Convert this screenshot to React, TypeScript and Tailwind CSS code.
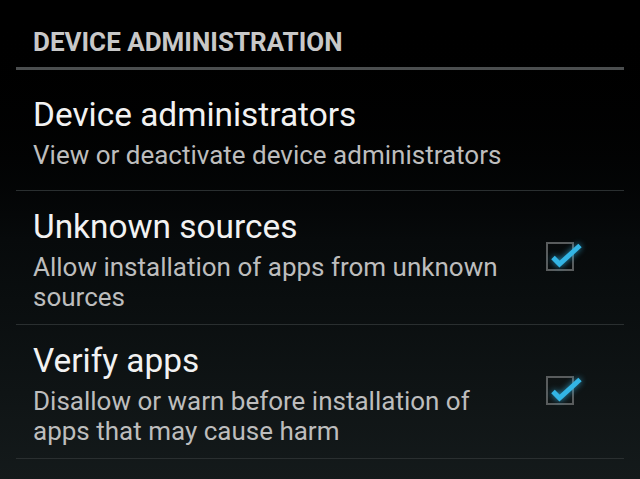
import React from 'react';

interface PrefItem {
  title: string;
  summary: string;
  checked?: boolean;
}

const items: PrefItem[] = [
  { title: 'Device administrators', summary: 'View or deactivate device administrators' },
  { title: 'Unknown sources', summary: 'Allow installation of apps from unknown sources', checked: true },
  { title: 'Verify apps', summary: 'Disallow or warn before installation of apps that may cause harm', checked: true },
];

const CheckBox = (): JSX.Element => {
  return (
    <div className="relative w-[28px] h-[29px] border-2 border-[#595c5d]">
      <svg
        className="absolute left-0 top-0 overflow-visible"
        width="28"
        height="29"
        viewBox="0 0 28 29"
        style={{ filter: 'drop-shadow(0 0 3px rgba(51,181,229,0.8))' }}
      >
        <path d="M5 13.5 L11.5 20 L32 1.5" fill="none" stroke="#33b5e5" strokeWidth="5" strokeLinejoin="miter" />
      </svg>
    </div>
  );
};

const PrefRow = ({ item }: { item: PrefItem }): JSX.Element => {
  return (
    <>
      <div className="flex items-center min-h-[120px] pt-[17px] pb-[12px] pl-[17px] pr-[50px]">
        <div className="flex-1 flex flex-col max-w-[478px]">
          <div className="text-[33.4px] leading-[38px] text-[#f2f2f2]">{item.title}</div>
          <div className="mt-[6px] text-[26px] leading-[30px] text-[#bdbdbd]">{item.summary}</div>
        </div>
        {item.checked && (
          <div className="ml-auto mb-[8px]">
            <CheckBox />
          </div>
        )}
      </div>
      <div className="h-px bg-[#2a2f30]" />
    </>
  );
};

export default function App(): JSX.Element {
  return (
    <div
      className="w-[640px] h-[479px] overflow-hidden bg-linear-to-b from-black via-[#070a0b] to-[#141a1b] px-4"
      style={{ fontFamily: 'Roboto, "Noto Sans", sans-serif' }}
    >
      <div className="pt-[27px] pl-[17px] text-[26px] leading-[30px] font-bold text-[#c8c8c8]">
        DEVICE ADMINISTRATION
      </div>
      <div className="mt-[10px] h-[3px] bg-[#4b4e4f]" />
      {items.map((item) => (
        <PrefRow key={item.title} item={item} />
      ))}
    </div>
  );
}
